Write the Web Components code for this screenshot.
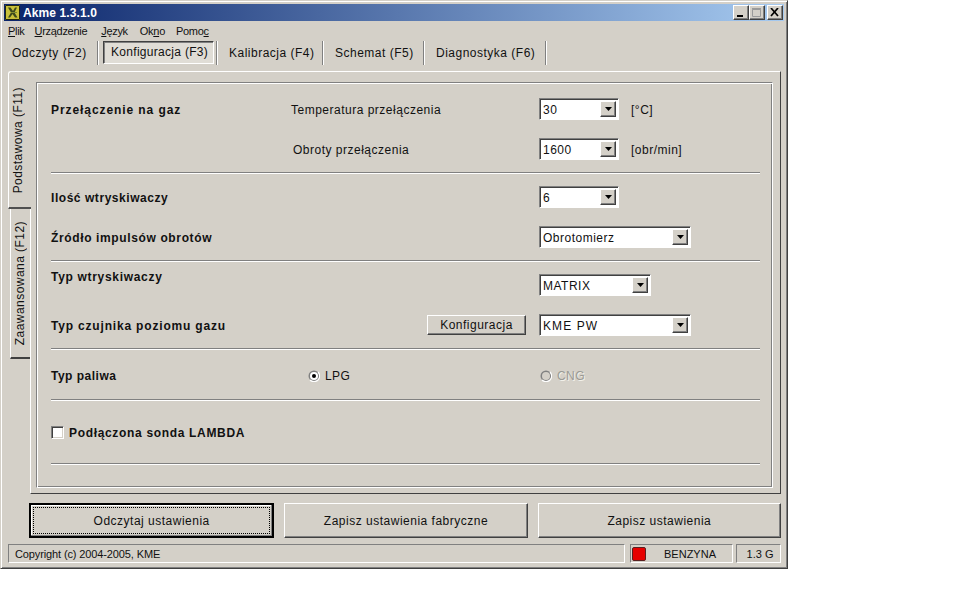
<!DOCTYPE html>
<html><head><meta charset="utf-8">
<style>
html,body{margin:0;background:#fff}
body{font:12px "Liberation Sans",Arial,sans-serif;color:#111}
</style></head><body>
<x-window>
  <x-titlebar>Akme 1.3.1.0</x-titlebar>
  <x-menu><span style="margin-right:-2px"><u>P</u>lik</span><span style="margin-right:2px"><u>U</u>rządzenie</span><span><u>J</u>ęzyk</span><span style="margin-right:-1px">Ok<u>n</u>o</span><span>Pomo<u>c</u></span></x-menu>
  <x-tabs>
    <x-tab w="95" pl="8">Odczyty (F2)</x-tab>
    <x-tab w="119" active>Konfiguracja (F3)</x-tab>
    <x-tab w="106">Kalibracja (F4)</x-tab>
    <x-tab w="101">Schemat (F5)</x-tab>
    <x-tab w="122">Diagnostyka (F6)</x-tab>
  </x-tabs>
  <x-page>
    <x-sidetab slot="side" active>Podstawowa (F11)</x-sidetab>
    <x-sidetab slot="side">Zaawansowana (F12)</x-sidetab>
    <x-section h="90" pt="14" gap="18">
      <x-row><b slot="label" style="letter-spacing:.92px">Przełączenie na gaz</b><x-text slot="mid" indent="0">Temperatura przełączenia</x-text><x-combo w="80">30</x-combo><x-text slot="unit">[°C]</x-text></x-row>
      <x-row><x-text slot="mid" indent="2">Obroty przełączenia</x-text><x-combo w="80">1600</x-combo><x-text slot="unit">[obr/min]</x-text></x-row>
    </x-section>
    <x-section h="88" pt="12" gap="18">
      <x-row><b slot="label" style="letter-spacing:.55px">Ilość wtryskiwaczy</b><x-combo w="80">6</x-combo></x-row>
      <x-row><b slot="label" style="letter-spacing:.63px">Źródło impulsów obrotów</b><x-combo w="152">Obrotomierz</x-combo></x-row>
    </x-section>
    <x-section h="88" pt="12" gap="18">
      <x-row top><b slot="label" style="letter-spacing:.69px">Typ wtryskiwaczy</b><x-combo w="112">MATRIX</x-combo></x-row>
      <x-row><b slot="label" style="letter-spacing:.82px">Typ czujnika poziomu gazu</b><x-btn slot="mid" w="99" h="20" end>Konfiguracja</x-btn><x-combo w="152" style="letter-spacing:1.1px">KME PW</x-combo></x-row>
    </x-section>
    <x-section h="51" pt="14" gap="0">
      <x-row><b slot="label">Typ paliwa</b><x-radio slot="mid" checked>LPG</x-radio><x-radio disabled>CNG</x-radio></x-row>
    </x-section>
    <x-section h="64" pt="21" gap="0">
      <x-row><x-check slot="label">Podłączona sonda LAMBDA</x-check></x-row>
    </x-section>
  </x-page>
  <x-actions>
    <x-btn default h="35">Odczytaj ustawienia</x-btn>
    <x-btn h="35">Zapisz ustawienia fabryczne</x-btn>
    <x-btn h="35">Zapisz ustawienia</x-btn>
  </x-actions>
  <x-status>
    <x-cell grow>Copyright (c) 2004-2005, KME</x-cell>
    <x-cell w="103" led>BENZYNA</x-cell>
    <x-cell w="45" center>1.3 G</x-cell>
  </x-status>
</x-window>
<script>
function def(name, css, html, extra){
  customElements.define(name, class extends HTMLElement{
    constructor(){super();this.attachShadow({mode:'open'}).innerHTML='<style>'+css+'</style>'+(typeof html==='function'?html(this):html);}
    connectedCallback(){extra&&extra(this)}
  });
}
const raised='border:1px solid;border-color:#fff #404040 #404040 #fff;box-shadow:inset -1px -1px 0 #808080;box-sizing:border-box;';
def('x-window',`:host{display:flex;flex-direction:column;box-sizing:border-box;width:788px;height:569px;background:#d4d0c8;padding:3px 3px 0;border:1px solid;border-color:#d4d0c8 #404040 #404040 #d4d0c8;box-shadow:inset 1px 1px 0 #fff,inset -1px -1px 0 #808080}`,'<slot></slot>');
def('x-titlebar',`:host{display:flex;align-items:center;height:17px;background:linear-gradient(90deg,#0a246a,#a6caf0);color:#fff;font:bold 12px "Liberation Sans",sans-serif;letter-spacing:.1px;padding-left:1px;gap:3px;flex:none}
.t{flex:1}.b{display:flex;margin-right:1px;gap:0}
i{width:16px;height:15px;box-sizing:border-box;background:#d4d0c8;${raised}display:flex;align-items:center;justify-content:center}
i.c{margin-left:2px}svg{display:block}`,
`<svg width="15" height="15" viewBox="0 0 15 15"><rect width="15" height="15" fill="#c9c13a"/><path d="M.5 .5h14v14H.5z" fill="none" stroke="#23260f"/><path d="M3 2.500h2.500L8 6l2-3.500h2L9.500 7.500 12.500 12.500H10L7.500 9 5 12.500H3L6 7.500z" fill="#3e4a1c"/><path d="M6 7.500h6" stroke="#7d8a2e"/></svg>
<span class="t"><slot></slot></span><span class="b"><i><svg width="10" height="9"><rect x="1" y="7" width="6" height="2" fill="#000"/></svg></i><i><svg width="10" height="9"><path d="M.5 1.500h8v7h-8z" fill="none" stroke="#9a9a9a"/><path d="M0 .5h9" stroke="#9a9a9a" stroke-width="2"/></svg></i><i class="c"><svg width="10" height="9"><path d="M1 0l7 8M8 0L1 8" stroke="#000" stroke-width="1.700" fill="none"/></svg></i></span>`);
def('x-menu',`:host{display:flex;height:20px;align-items:center;padding-left:4px;gap:12px;font:11px "Liberation Sans",sans-serif;flex:none;letter-spacing:-.3px}
::slotted(span){display:block}`,'<slot></slot>');
def('x-tabs',`:host{display:flex;height:24px;flex:none;align-items:flex-start}`,'<slot></slot>');
def('x-tab',`:host{display:flex;height:24px;box-sizing:border-box;align-items:center;font-size:12px;letter-spacing:.5px;border-right:1px solid #fff;box-shadow:inset -1px 0 0 #808080;flex:none}
:host([active]){letter-spacing:.3px;padding:0 3px 0 4px}
.a{display:block;white-space:nowrap}
:host([active]) .a{border:1px solid;border-color:#404040 #fff #fff #404040;box-shadow:inset 1px 1px 0 #808080;background:#e0ddd6;padding:3px 0 3px 7px;width:111px;box-sizing:border-box;line-height:15px;margin-bottom:2px}`,
e=>`<style>:host{width:${e.getAttribute('w')}px}:host(:not([active])){padding-left:${e.getAttribute('pl')||11}px}</style><span class="a"><slot></slot></span>`);
def('x-page',`:host{display:flex;flex:none;height:423px;margin:6px 3px 0 4px}
.side{width:22px;flex:none;display:flex;flex-direction:column;align-items:flex-end;position:relative;z-index:1}
.p{flex:1;box-sizing:border-box;border:1px solid;border-color:#fff #404040 #404040 #fff;padding:10px 7px 5px 5px}
.i{box-sizing:border-box;height:100%;border:1px solid #fff;border-color:#808080 #fff #fff #808080;box-shadow:inset 1px 1px 0 #fff,inset -1px -1px 0 #808080;padding:1px 12px 0 14px}`,
`<div class="side"><slot name="side"></slot></div><div class="p"><div class="i"><slot></slot></div></div>`);
def('x-sidetab',`:host{display:flex;box-sizing:border-box;width:20px;height:150px;border-left:1px solid #fff;border-bottom:2px solid #404040;align-items:center;justify-content:center;writing-mode:vertical-rl;background:#d4d0c8;padding-right:1px}
:host([active]){width:23px;height:138px;margin-right:-1px;margin-left:-1px;padding-right:5px;padding-top:1px;border-top:1px solid #fff;border-bottom:2px solid #505050;border-radius:3px 0 0 0}
span{display:block;transform:rotate(180deg);letter-spacing:.45px;font-size:12px;white-space:nowrap}`,
'<span><slot></slot></span>');
def('x-section',`:host{display:flex;flex-direction:column;box-sizing:border-box;border-bottom:1px solid #fff}
.rule{height:1px;background:#808080;margin-top:auto}`,
e=>`<style>:host{height:${e.getAttribute('h')}px;padding-top:${e.getAttribute('pt')}px}.w{display:flex;flex-direction:column;gap:${e.getAttribute('gap')}px}</style><div class="w"><slot></slot></div><div class="rule"></div>`);
def('x-row',`:host{display:grid;grid-template-columns:240px 248px 1fr;align-items:center;height:22px;font-size:12px}
.u{padding-left:12px;display:flex;padding-top:1px}.f{display:flex;align-items:center;height:22px}
.l{letter-spacing:.5px;padding-top:1px}.m{display:flex;align-items:center;box-sizing:border-box;height:22px;padding-top:1px}
:host([top]) .l{align-self:start;margin-top:-4px;padding:0;height:14px;line-height:14px}`,
`<div class="l"><slot name="label"></slot></div><div class="m"><slot name="mid"></slot></div><div class="f"><slot></slot><div class="u"><slot name="unit"></slot></div></div>`);
def('x-text',`:host{display:inline-block;letter-spacing:.5px}`,e=>`<style>:host{margin-left:${e.getAttribute('indent')||0}px}</style><slot></slot>`);
def('x-combo',`:host{display:flex;box-sizing:border-box;height:22px;background:#fff;border:1px solid;border-color:#808080 #fff #fff #808080;box-shadow:inset 1px 1px 0 #404040;padding:2px 2px 2px 3px;align-items:stretch;flex:none;font-size:12px;letter-spacing:.5px}
.t{flex:1;line-height:16px;display:block;padding-top:1px;box-sizing:border-box;height:16px}
.b{width:16px;box-sizing:border-box;background:#d4d0c8;${raised}display:flex;align-items:center;justify-content:center}
svg{display:block}`,
e=>`<style>:host{width:${e.getAttribute('w')}px}</style><span class="t"><slot></slot></span><span class="b"><svg width="7" height="4"><path d="M0 0h7L3.500 4z" fill="#000"/></svg></span>`);
def('x-btn',`:host{display:flex;box-sizing:border-box;background:#d4d0c8;${raised}align-items:center;justify-content:center;font-size:12px;letter-spacing:.5px;flex:1 1 0}
:host([end]){margin-left:136px;margin-top:-1px}
:host([default]){border:2px solid #000;box-shadow:inset -1px -1px 0 #808080,inset 1px 1px 0 #fff;padding:0}
.f{display:flex;align-items:center;justify-content:center}
:host([default]) .f{width:100%;box-sizing:border-box;margin:2px;height:calc(100% - 4px);outline:1px dotted #000;outline-offset:-1px}`,
e=>`<style>:host{height:${e.getAttribute('h')}px;${e.hasAttribute('w')?'width:'+e.getAttribute('w')+'px;flex:none':''}}</style><span class="f"><slot></slot></span>`);
def('x-radio',`:host{display:inline-flex;align-items:center;gap:5px;font-size:12px;letter-spacing:.4px}
svg{display:block}
:host(:not([disabled])){margin-left:17px}
:host([disabled]){color:#9a9a94;text-shadow:1px 1px 0 #f2f0ea;margin-left:1px;margin-top:1px}`,
e=>{const d=e.hasAttribute('disabled'),c=e.hasAttribute('checked');return `<svg width="12" height="12" viewBox="0 0 12 12"><circle cx="6" cy="6" r="5.500" fill="#808080"/><path d="M10 2a5.500 5.500 0 0 1-8 8" stroke="#fff" fill="none" stroke-width="1.200"/><circle cx="6" cy="6" r="4" fill="${d?'#d4d0c8':'#fff'}"/>${c?'<circle cx="6" cy="6" r="2" fill="#000"/>':''}</svg><span><slot></slot></span>`});
def('x-check',`:host{display:inline-flex;align-items:center;gap:5px;font-weight:bold;letter-spacing:.67px;margin-top:1px}
i{display:block;box-sizing:border-box;width:13px;height:13px;background:#fff;border:1px solid;border-color:#808080 #fff #fff #808080;box-shadow:inset 1px 1px 0 #404040,inset -1px -1px 0 #d4d0c8}`,
`<i></i><span><slot></slot></span>`);
def('x-actions',`:host{display:flex;gap:10px;margin:9px 3px 0 25px;flex:none}`,'<slot></slot>');
def('x-status',`:host{display:flex;height:19px;gap:3px;margin:6px 3px 0 4px;flex:none}`,'<slot></slot>');
def('x-cell',`:host{display:flex;box-sizing:border-box;align-items:center;border:1px solid;border-color:#808080 #fff #fff #808080;font-size:11px;letter-spacing:-.12px;padding-left:6px;height:19px}
:host([grow]){flex:1;margin-right:2px}
:host([center]){justify-content:center;padding:0 0 0 3px;letter-spacing:0}
:host([led]){padding:0 16px 0 1px;justify-content:space-between;letter-spacing:0}
i{display:block;width:14px;height:14px;box-sizing:border-box;background:#e60000;border:1px solid #5a2020;border-radius:2px}`,
e=>`<style>:host{${e.hasAttribute('w')?'width:'+e.getAttribute('w')+'px;flex:none':''}}</style>${e.hasAttribute('led')?'<i></i>':''}<span><slot></slot></span>`);
</script>
</body></html>
